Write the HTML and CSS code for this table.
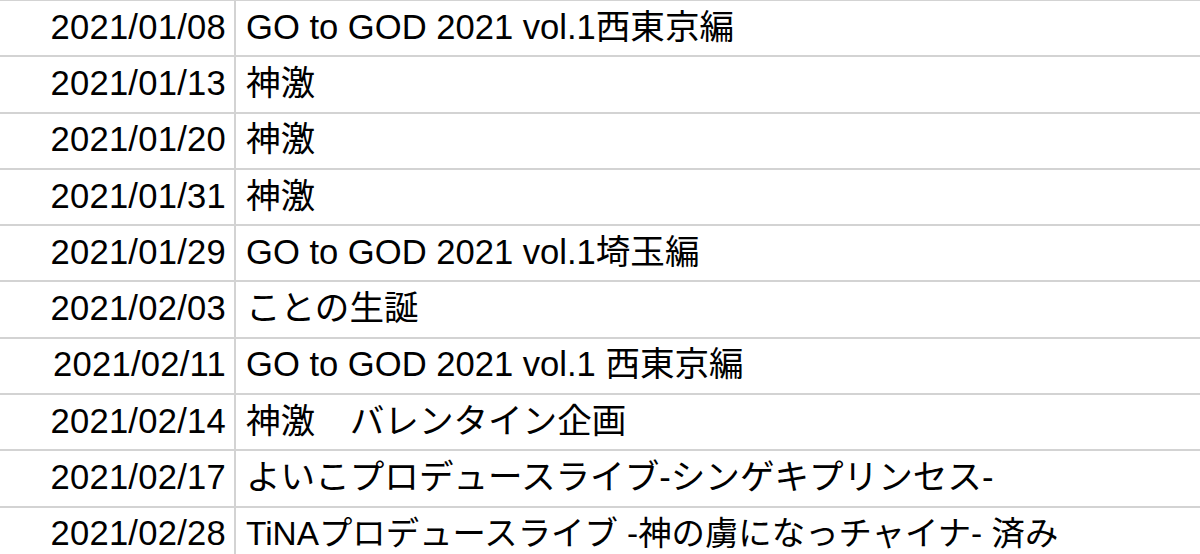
FILE: index.html
```html
<!DOCTYPE html>
<html lang="ja">
<head>
<meta charset="utf-8">
<link rel="stylesheet" href="styles.css">
</head>
<body>
<div class="sheet">
  <div class="row"><div class="date">2021/01/08</div><div class="title">GO to GOD 2021 vol.1西東京編</div></div>
  <div class="row"><div class="date">2021/01/13</div><div class="title">神激</div></div>
  <div class="row"><div class="date">2021/01/20</div><div class="title">神激</div></div>
  <div class="row"><div class="date">2021/01/31</div><div class="title">神激</div></div>
  <div class="row"><div class="date">2021/01/29</div><div class="title">GO to GOD 2021 vol.1埼玉編</div></div>
  <div class="row"><div class="date">2021/02/03</div><div class="title">ことの生誕</div></div>
  <div class="row"><div class="date">2021/02/11</div><div class="title">GO to GOD 2021 vol.1 西東京編</div></div>
  <div class="row"><div class="date">2021/02/14</div><div class="title">神激　バレンタイン企画</div></div>
  <div class="row"><div class="date">2021/02/17</div><div class="title">よいこプロデュースライブ-シンゲキプリンセス-</div></div>
  <div class="row"><div class="date">2021/02/28</div><div class="title title-fit">TiNAプロデュースライブ -神の虜になっチャイナ- 済み</div></div>
</div>
</body>
</html>
```

FILE: styles.css
```css
html, body {
  margin: 0;
  padding: 0;
  background: #ffffff;
}

body {
  width: 1200px;
  height: 554px;
  overflow: hidden;
  font-family: "Liberation Sans", "Noto Sans CJK JP", sans-serif;
  font-size: 34.6px;
  color: #000000;
}

.sheet {
  margin-top: -1px;
}

.row {
  box-sizing: border-box;
  height: 56.3px;
  border-top: 2px solid #d3d3d3;
  display: grid;
  grid-template-columns: 234px 1fr;
}

.date,
.title {
  display: flex;
  align-items: center;
  line-height: 39px;
  padding-bottom: 2px;
  white-space: nowrap;
}

.date {
  justify-content: flex-end;
  padding-right: 8px;
  letter-spacing: 0.25px;
}

.title {
  border-left: 2px solid #d3d3d3;
  padding-left: 10px;
}

.title-fit {
  font-size: 33.4px;
}
```
